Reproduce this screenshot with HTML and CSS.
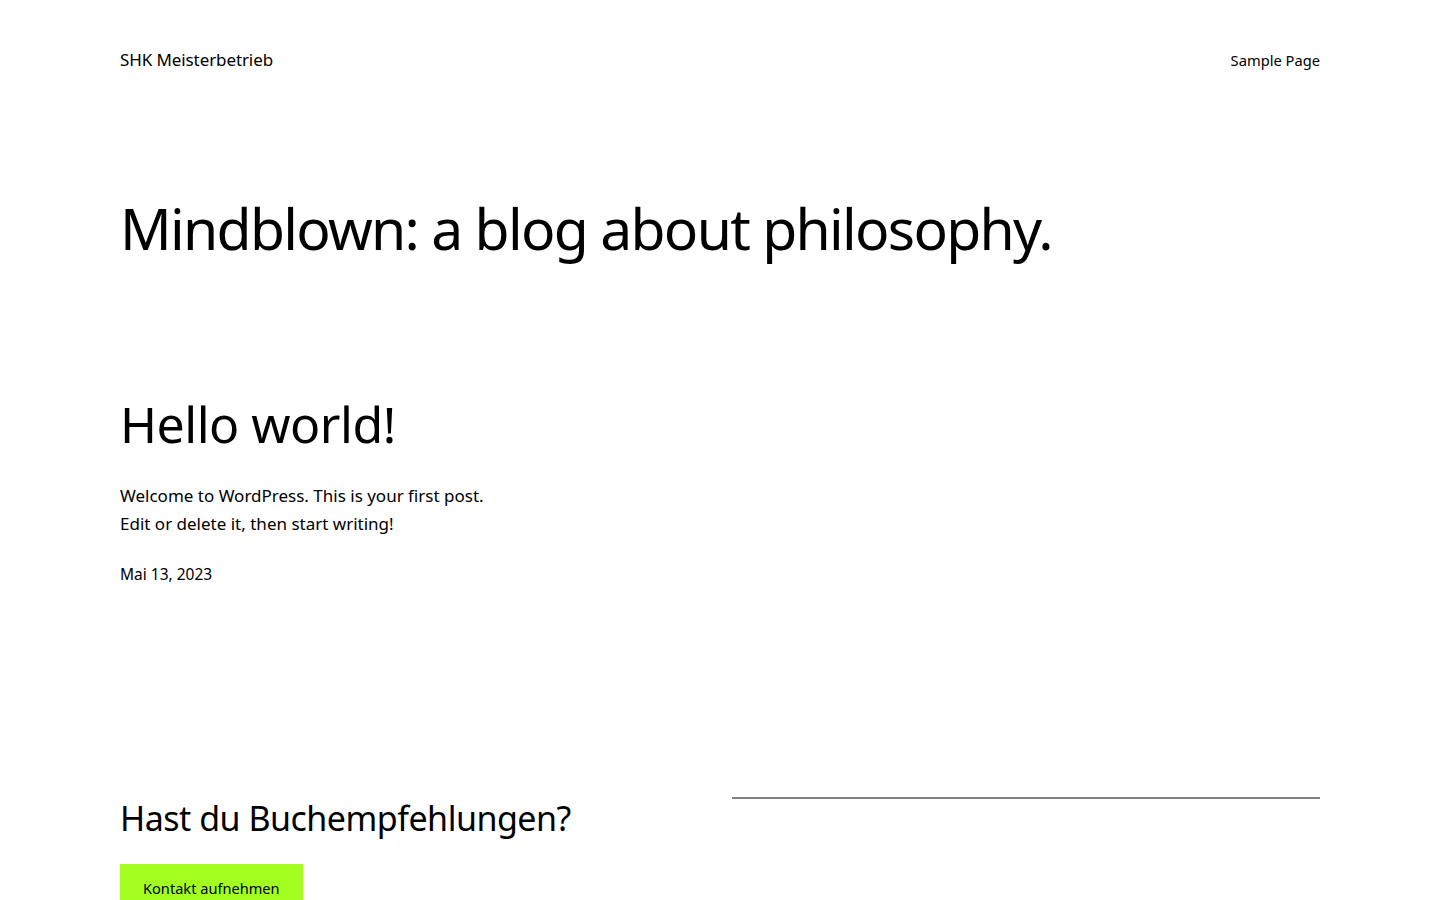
FILE: index.html
```html
<!DOCTYPE html>
<html lang="de">
<head>
<meta charset="utf-8">
<title>SHK Meisterbetrieb</title>
<link rel="stylesheet" href="styles.css">
</head>
<body>
<header class="site-header">
  <a class="site-title" href="#">SHK Meisterbetrieb</a>
  <nav class="nav"><a href="#">Sample Page</a></nav>
</header>
<main class="main">
  <h1 class="page-heading">Mindblown: a blog about philosophy.</h1>
  <article class="post">
    <h2 class="post-title">Hello world!</h2>
    <p class="post-excerpt">Welcome to WordPress. This is your first post.<br>Edit or delete it, then start writing!</p>
    <div class="post-date">Mai 13, 2023</div>
  </article>
  <section class="cta">
    <div class="cta-left">
      <h2 class="cta-heading">Hast du Buchempfehlungen?</h2>
      <a class="button" href="#">Kontakt aufnehmen</a>
    </div>
    <div class="cta-right"><hr class="separator"></div>
  </section>
</main>
</body>
</html>
```

FILE: styles.css
```css
html, body {
  margin: 0;
  padding: 0;
  background: #ffffff;
  color: #000000;
  font-family: "Noto Sans", "Open Sans", sans-serif;
}
body {
  overflow: hidden;
  height: 900px;
}
a { color: inherit; text-decoration: none; }

.site-header {
  display: flex;
  justify-content: space-between;
  align-items: center;
  padding: 46px 120px 0;
  height: 28px;
}
.site-title {
  font-size: 17px;
  line-height: 28px;
  letter-spacing: -0.1px;
}
.nav a {
  font-size: 14.7px;
  line-height: 26px;
}

.main {
  padding: 0 120px;
}
.page-heading {
  margin: 114px 0 0;
  font-size: 57px;
  font-weight: 400;
  line-height: 80px;
  letter-spacing: -1.7px;
}
.post {
  margin-top: 126px;
}
.post-title {
  margin: 0;
  font-size: 50px;
  font-weight: 400;
  line-height: 60px;
  letter-spacing: -0.5px;
}
.post-excerpt {
  margin: 28px 0 0;
  font-size: 17px;
  line-height: 28px;
}
.post-date {
  margin-top: 24px;
  font-size: 15.5px;
  line-height: 24px;
}

.cta {
  margin-top: 210px;
  display: grid;
  grid-template-columns: 1fr 1fr;
  column-gap: 24px;
}
.cta-heading {
  margin: 0;
  font-size: 34px;
  font-weight: 400;
  line-height: 44px;
  letter-spacing: -0.5px;
}
.button {
  display: inline-block;
  margin-top: 24px;
  background: #a3ff1f;
  padding: 12px 23px 14px;
  font-size: 14.6px;
  line-height: 24px;
}
.separator {
  margin: 1px 0 0;
  border: 0;
  border-top: 2px solid #808080;
}
```
